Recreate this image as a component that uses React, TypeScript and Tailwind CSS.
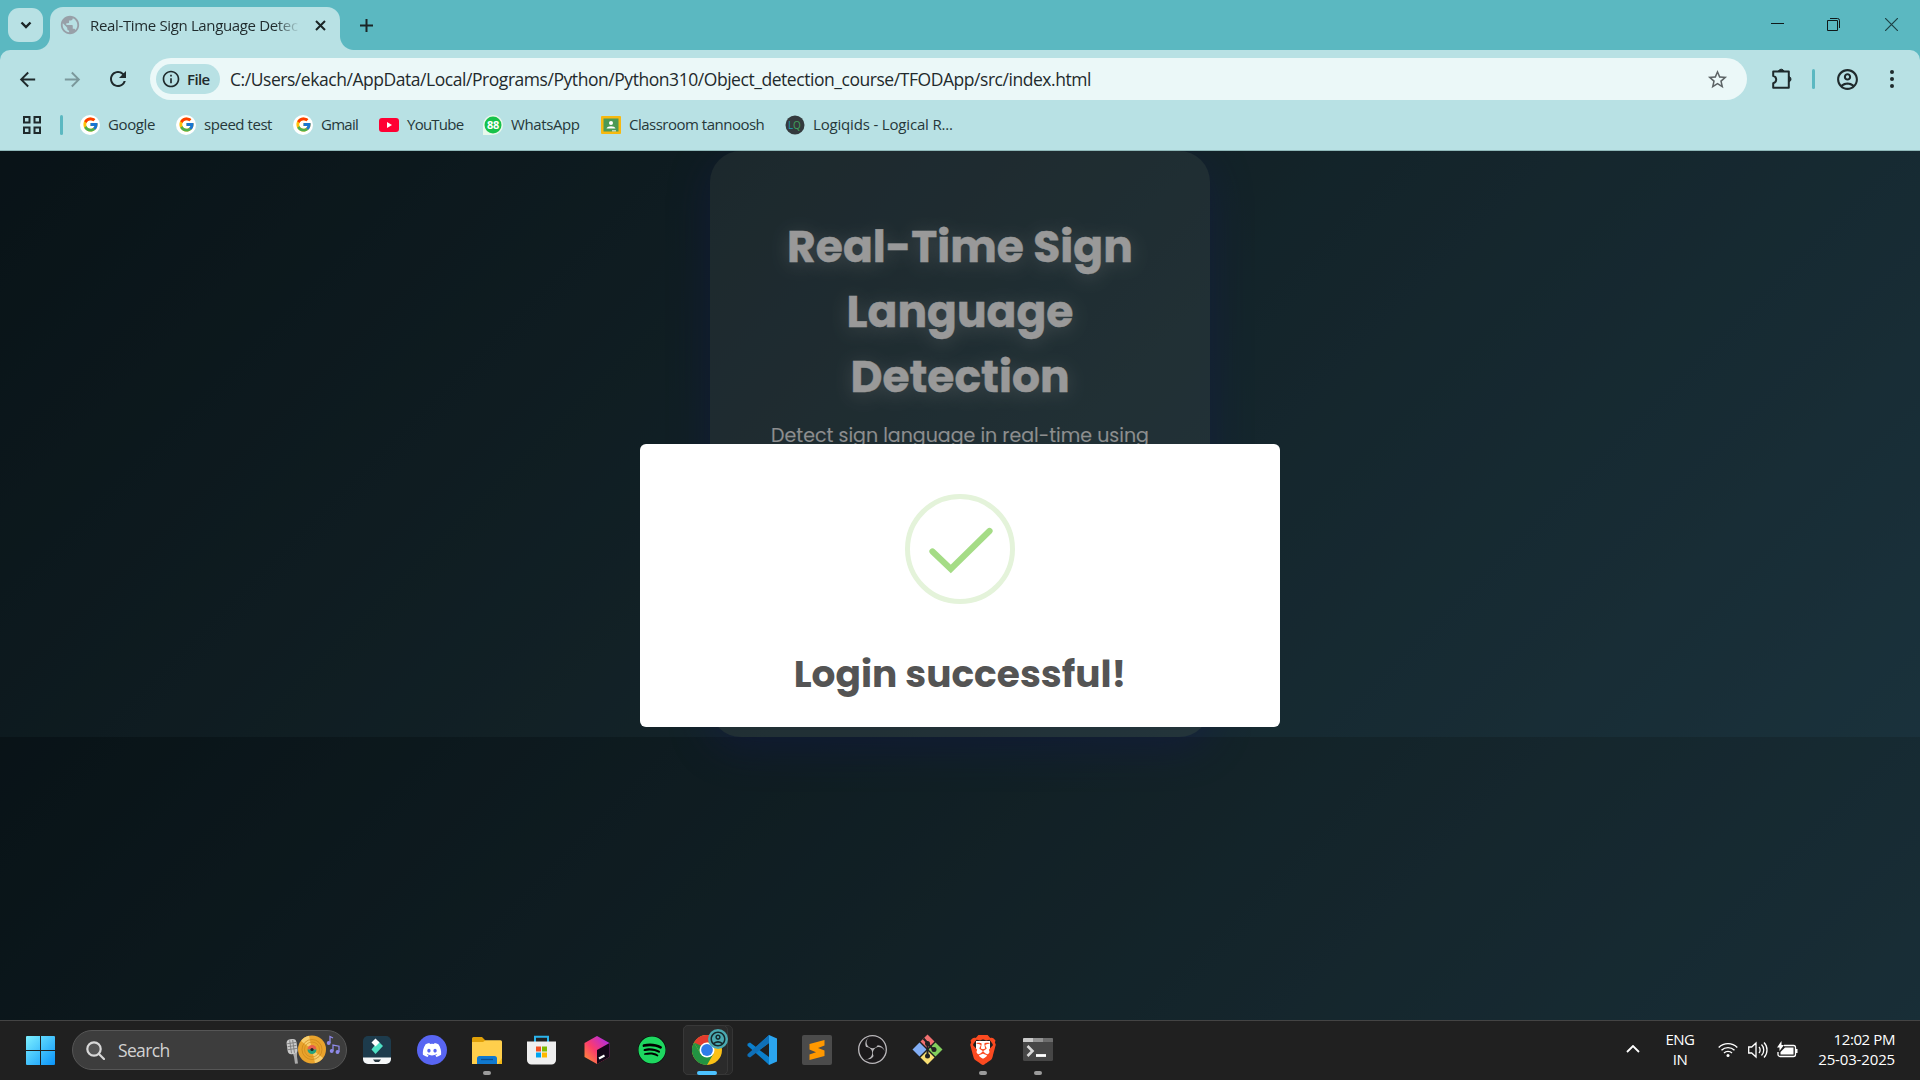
import type { ReactNode } from 'react';
import { FcGoogle } from 'react-icons/fc';
import { FaDiscord, FaSpotify } from 'react-icons/fa';
import { SiBrave, SiObsstudio } from 'react-icons/si';
import {
  MdArrowBack,
  MdArrowForward,
  MdPublic,
  MdRefresh,
  MdStarBorder,
  MdOutlineAccountCircle,
  MdInfoOutline,
} from 'react-icons/md';

function TabStrip() {
  return (
    <div className="flex h-[50px] shrink-0 items-start bg-[#5bb8c1]">
      <div className="ml-2 mt-2 flex h-[34px] w-[35px] items-center justify-center rounded-[11px] bg-[#b8e1e4]">
        <svg width="12" height="8" viewBox="0 0 12 8" fill="none" stroke="#1b2526" strokeWidth="2.4">
          <path d="M1.5 1.5 6 6l4.500-4.500" />
        </svg>
      </div>
      <div className="relative ml-[7px] mt-[7px] flex h-[43px] w-[290px] items-center rounded-t-[13px] bg-[#b8e1e4] pb-[7px]">
        <span className="absolute -left-[14px] bottom-0 h-[14px] w-[14px] bg-[radial-gradient(circle_at_0_0,transparent_13.5px,#b8e1e4_14.5px)]" />
        <span className="absolute -right-[14px] bottom-0 h-[14px] w-[14px] bg-[radial-gradient(circle_at_100%_0,transparent_13.5px,#b8e1e4_14.5px)]" />
        <MdPublic className="ml-[9px] h-[22px] w-[22px] text-[#98a0a8]" />
        <div className="ml-[9px] w-[210px] whitespace-nowrap text-[15px] leading-5 tracking-[-0.35px] text-[#1f2a2c] [mask-image:linear-gradient(90deg,#000_88%,transparent)]">
          Real-Time Sign Language Detec
        </div>
        <svg className="ml-[15px]" width="11" height="11" viewBox="0 0 11 11" stroke="#1b2526" strokeWidth="2">
          <path d="m1 1 9 9m0-9-9 9" />
        </svg>
      </div>
      <svg className="ml-[20px] mt-[19px]" width="13" height="13" viewBox="0 0 13 13" stroke="#1b2526" strokeWidth="2">
        <path d="M6.500 0v13M0 6.500h13" />
      </svg>
      <div className="ml-auto mr-[22px] mt-[18px] flex items-start">
        <svg className="mr-[43px]" width="13" height="13" viewBox="0 0 13 13" stroke="#10191a">
          <path d="M0 5.500h13" />
        </svg>
        <svg className="mr-[45px]" width="13" height="13" viewBox="0 0 13 13" fill="none" stroke="#10191a">
          <path d="M.5 2.500h10v10H.5zM3 .5h7.500a2 2 0 0 1 2 2V10" />
        </svg>
        <svg width="13" height="13" viewBox="0 0 13 13" stroke="#1d4145" strokeWidth="1.200">
          <path d="m0 0 13 13m0-13L0 13" />
        </svg>
      </div>
    </div>
  );
}

function Toolbar() {
  return (
    <div className="h-[58px] shrink-0 bg-[#5bb8c1]">
      <div className="flex h-full items-center rounded-t-[10px] bg-[#b8e1e4] text-[#1f2a2c]">
        <MdArrowBack className="ml-[16px] h-[23px] w-[23px]" />
        <MdArrowForward className="ml-[22px] h-[23px] w-[23px] text-[#7b989b]" />
        <MdRefresh className="ml-[22px] h-[24px] w-[24px]" />
        <div className="ml-[20px] flex h-[42px] w-[1597px] items-center rounded-full bg-[#ebf8f8]">
          <div className="ml-[6px] flex h-[30px] w-[64px] items-center rounded-full bg-[#b8e1e4]">
            <MdInfoOutline className="ml-[5px] h-[20px] w-[20px]" />
            <span className="ml-[6px] text-[15px] font-semibold tracking-[-0.6px]">File</span>
          </div>
          <span className="ml-[10px] whitespace-nowrap text-[17.5px] tracking-[-0.45px]">
            C:/Users/ekach/AppData/Local/Programs/Python/Python310/Object_detection_course/TFODApp/src/index.html
          </span>
          <MdStarBorder className="ml-auto mr-[18px] h-[23px] w-[23px] text-[#5d6466]" />
        </div>
        <svg className="-mt-[2px] ml-[23px]" width="23" height="23" viewBox="0 0 23 23" fill="none" stroke="#1f2a2c" strokeWidth="2">
          <path d="M3.200 4.500h15.600v16.200H3.200v-4.500c4-1 4-6.300 0-7.300z" strokeLinejoin="round" />
          <path d="M8.500 4a3 3 0 0 1 5.500 0zM19.300 9.500a3 3 0 0 1 0 5.400z" fill="#1f2a2c" strokeWidth="1" />
        </svg>
        <span className="ml-[19px] h-5 w-[3px] rounded-full bg-[#5bb8c1]" />
        <MdOutlineAccountCircle className="ml-[20px] h-[25px] w-[25px]" />
        <svg className="-mt-px ml-[29px]" width="6" height="20" viewBox="0 0 6 20" fill="#1f2a2c">
          <circle cx="3" cy="3" r="2" />
          <circle cx="3" cy="10" r="2" />
          <circle cx="3" cy="17" r="2" />
        </svg>
      </div>
    </div>
  );
}

function GoogleMark() {
  return (
    <span className="flex h-5 w-5 items-center justify-center rounded-full bg-white">
      <FcGoogle className="h-[17px] w-[17px]" />
    </span>
  );
}

function Bookmark({ icon, label, className }: { icon: ReactNode; label: string; className: string }) {
  return (
    <div className={`flex shrink-0 items-center gap-2 whitespace-nowrap ${className}`}>
      {icon}
      <span>{label}</span>
    </div>
  );
}

function BookmarksBar() {
  return (
    <div className="flex h-[43px] shrink-0 items-center border-b border-[#8fb8b9] bg-[#b8e1e4] pb-[9px] pl-[23px] text-[15px] text-[#26383a]">
      <svg className="mt-px" width="18" height="18" viewBox="0 0 18 18" fill="none" stroke="#1f2a2c" strokeWidth="2">
        <path d="M1 1h5.500v5.500H1zM11.500 1H17v5.500h-5.500zM1 11.500h5.500V17H1zM11.500 11.500H17V17h-5.500z" />
      </svg>
      <span className="ml-[19px] mr-[17px] h-5 w-[3px] rounded-full bg-[#5bb8c1]" />
      <Bookmark className="w-[96px] tracking-[-0.4px]" icon={<GoogleMark />} label="Google" />
      <Bookmark className="w-[117px] tracking-[-0.45px]" icon={<GoogleMark />} label="speed test" />
      <Bookmark className="w-[86px] tracking-[-0.75px]" icon={<GoogleMark />} label="Gmail" />
      <Bookmark
        className="w-[104px] tracking-[-0.75px]"
        icon={
          <svg width="20" height="20" viewBox="0 0 20 20">
            <rect y="3" width="20" height="14" rx="3" fill="#f03" />
            <path d="m8 7 5 3-5 3z" fill="#fff" />
          </svg>
        }
        label="YouTube"
      />
      <Bookmark
        className="w-[118px] tracking-[-0.4px]"
        icon={
          <svg width="20" height="20" viewBox="0 0 20 20">
            <path d="M0 20V10a10 10 0 1 1 10 10z" fill="#e8f8ec" />
            <circle cx="10" cy="10" r="8.500" fill="#17c24a" />
            <text x="10" y="14" fontSize="11" fontWeight="700" textAnchor="middle" fill="#fff">88</text>
          </svg>
        }
        label="WhatsApp"
      />
      <Bookmark
        className="w-[184px] tracking-[-0.5px]"
        icon={
          <svg width="20" height="18" viewBox="0 0 20 18">
            <rect width="20" height="18" rx="1" fill="#f7b90f" />
            <rect x="2.500" y="2.500" width="15" height="13" fill="#4c9a55" />
            <circle cx="10" cy="7" r="2" fill="#fff" />
            <path d="M5.500 12.500c1-3 8-3 9 0z" fill="#fff" />
            <path d="M11 15.500h4V14h-4z" fill="#fff" opacity=".6" />
          </svg>
        }
        label="Classroom tannoosh"
      />
      <Bookmark
        className="tracking-[-0.17px]"
        icon={
          <svg width="20" height="20" viewBox="0 0 20 20">
            <circle cx="10" cy="10" r="9.500" fill="#343a3d" />
            <text x="3" y="13.500" fontSize="10" fill="#1d9fb5">L</text>
            <text x="8" y="13.500" fontSize="10" fill="#3fa35c">Q</text>
          </svg>
        }
        label="Logiqids - Logical R..."
      />
    </div>
  );
}

function LoginModal() {
  return (
    <div className="absolute left-[640px] top-[293px] flex h-[283px] w-[640px] flex-col items-center rounded-[6px] bg-white">
      <svg className="mt-[50px]" width="110" height="110" viewBox="0 0 110 110" fill="none">
        <circle cx="55" cy="55" r="52.500" stroke="#e4f3da" strokeWidth="5" />
        <path d="m27.500 57.500 18.300 17.500 38.700-38" stroke="#a5dc86" strokeWidth="6.200" strokeLinecap="round" />
      </svg>
      <h2 className="mt-[44px] whitespace-nowrap text-[37.5px] font-bold leading-[52px] text-[#545454]">
        Login successful!
      </h2>
    </div>
  );
}

function Page() {
  return (
    <main className="relative h-[869px] shrink-0 overflow-hidden bg-[linear-gradient(135deg,#0f2027,#203a43,#2c5364)] bg-[length:1920px_586px] font-[Poppins,Inter,sans-serif]">
      <section className="mx-auto flex h-[586px] w-[500px] flex-col items-center rounded-[31px] bg-white/10 pt-[63px] text-center shadow-[0_10px_40px_rgba(31,38,135,0.4)]">
        <h1 className="w-[400px] text-[44px] font-bold leading-[65px] text-white [-webkit-text-stroke:0.4px_#fff] [text-shadow:0_3px_19px_rgba(255,255,255,0.3)]">
          Real-Time Sign
          <br />
          Language
          <br />
          Detection
        </h1>
        <p className="mt-[9px] whitespace-nowrap text-[19px] leading-[36px] text-white/90">
          Detect sign language in real-time using
        </p>
      </section>
      <div className="absolute inset-0 bg-black/40" />
      <LoginModal />
    </main>
  );
}

function Task({ children, mark }: { children: ReactNode; mark?: boolean }) {
  return (
    <div className="relative flex h-full w-[55.100px] shrink-0 items-center justify-center pb-[2px]">
      {children}
      {mark && <span className="absolute bottom-[5px] h-1 w-2 rounded-full bg-[#9b9b9b]" />}
    </div>
  );
}

function ChromeIcon() {
  return (
    <svg width="30" height="30" viewBox="0 0 30 30">
      <circle cx="15" cy="15" r="15" fill="#fbc116" />
      <path d="M2 7.500A15 15 0 0 0 15 30l6.500-11.200L15 15 8.500 18.700z" fill="#229342" />
      <path d="M2 7.500A15 15 0 0 1 28 7.500H15L9 15z" fill="#e33b2e" />
      <path d="M2 7.500 8.500 18.700 12 12z" fill="#229342" />
      <circle cx="15" cy="15" r="7.500" fill="#fff" />
      <circle cx="15" cy="15" r="5.900" fill="#2f7de9" />
    </svg>
  );
}

function Taskbar() {
  return (
    <footer className="flex h-[60px] shrink-0 items-center border-t border-[#444] bg-[#202020] text-white">
      <svg className="ml-[26px]" width="29" height="29" viewBox="0 0 29 29">
        <defs>
          <linearGradient id="win" x1="0" y1="0" x2="1" y2="1">
            <stop stopColor="#7df0ff" />
            <stop offset="1" stopColor="#0a94fa" />
          </linearGradient>
        </defs>
        <path
          fill="url(#win)"
          d="M1 0h13v14H0V1a1 1 0 0 1 1-1zM15 0h13a1 1 0 0 1 1 1v13H15zM0 15h14v14H1a1 1 0 0 1-1-1zM15 15h14v13a1 1 0 0 1-1 1H15z"
        />
      </svg>
      <div className="-mt-px ml-[17px] flex h-10 w-[275px] items-center rounded-full border border-[#565656] bg-[#3d3d3d]">
        <svg className="ml-[13px]" width="19" height="19" viewBox="0 0 19 19" fill="none" stroke="#d8d8d8" strokeWidth="2.200">
          <circle cx="8" cy="8" r="6.700" fill="#555" />
          <path d="m13 13 5 5" strokeLinecap="round" />
        </svg>
        <span className="ml-[13px] text-[17.5px] tracking-[-0.65px] text-[#d2d2d2]">Search</span>
        <svg className="ml-auto mr-[6px]" width="54" height="32" viewBox="0 0 54 32">
          <g transform="translate(-1.500 0) rotate(-8 8 12)">
            <path d="M7 17h5l-1 6v7H8v-7z" fill="#aaa" />
            <rect x="2.500" y="5" width="10" height="15" rx="4" fill="#c9c9c9" />
            <path d="M3 9h9M3 12h9M3 15h9M6 6v13M9 6v13" stroke="#777" strokeWidth=".8" />
          </g>
          <circle cx="26" cy="15.500" r="14" fill="#e9a32c" />
          <path d="M26 15.500 15 6.900A14 14 0 0 1 23 1.800zM26 15.500l11 8.600a14 14 0 0 1-8 5z" fill="#f8ce6d" />
          <circle cx="26" cy="15.500" r="10" fill="none" stroke="#c98418" strokeWidth=".7" />
          <circle cx="26" cy="15.500" r="7.500" fill="none" stroke="#c98418" strokeWidth=".6" />
          <path d="M21.500 15.500a4.500 4.500 0 0 1 9 0z" fill="#e8604c" />
          <path d="M21.500 15.500a4.500 4.500 0 0 0 9 0z" fill="#27a17c" />
          <circle cx="26" cy="15.500" r="1.600" fill="#222" />
          <g stroke="#8e8ae8" fill="#8e8ae8" strokeWidth="1.300">
            <path d="M44 9V2.500l3 1.500M47 17v-6l6 1.200V18" fill="none" />
            <circle cx="42.700" cy="9" r="1.300" />
            <circle cx="45.700" cy="17" r="1.300" />
            <circle cx="51.500" cy="18" r="1.300" />
          </g>
        </svg>
      </div>
      <div className="ml-[2px] flex h-full">
        <Task>
          <svg width="28" height="28" viewBox="0 0 28 28">
            <rect width="28" height="28" rx="5" fill="#1d3b4c" />
            <path d="m15 5 5 5-7.500 8-4-4.500z" fill="#4fe0c4" />
            <path d="m12.500 2.500 4 4-4 4-4-4z" fill="#fff" />
            <path d="M0 21.500h28V23a5 5 0 0 1-5 5H5a5 5 0 0 1-5-5z" fill="#f5f7f8" />
            <path d="M10 23.500h8l-2 2.500h-4z" fill="#26363e" />
          </svg>
        </Task>
        <Task>
          <span className="flex h-[30px] w-[30px] items-center justify-center rounded-full bg-[#5865f2]">
            <FaDiscord className="h-5 w-5" />
          </span>
        </Task>
        <Task mark>
          <svg className="mt-px" width="30" height="27" viewBox="0 0 30 27">
            <path d="M0 1.500A1.500 1.500 0 0 1 1.500 0H10l3.500 3.500V8H0z" fill="#e0a008" />
            <path d="M0 5h11l2.500-1.800H28.500A1.500 1.500 0 0 1 30 4.700V27H0z" fill="#ffcf4c" />
            <path d="M5 27v-5.500A2.500 2.500 0 0 1 7.500 19h15a2.500 2.500 0 0 1 2.500 2.500V27z" fill="#1079cf" />
            <path d="M9 22.500h12" stroke="#0b4f91" strokeWidth="1.300" />
            <path d="M26 27h4v-6z" fill="#f3b918" />
          </svg>
        </Task>
        <Task>
          <svg className="mt-px" width="29" height="30" viewBox="0 0 29 30">
            <path d="M8 7V1.800h13V7" fill="none" stroke="#2bb4ec" strokeWidth="2" />
            <path d="M0 6.500h29V25a4.500 4.500 0 0 1-4.500 4.500h-20A4.500 4.500 0 0 1 0 25z" fill="#efefef" />
            <path d="M9 11.500h5v5H9z" fill="#f25022" />
            <path d="M15 11.500h5v5h-5z" fill="#7fba00" />
            <path d="M9 17.500h5v5H9z" fill="#00a4ef" />
            <path d="M15 17.500h5v5h-5z" fill="#ffb900" />
          </svg>
        </Task>
        <Task>
          <svg width="26" height="28" viewBox="0 0 26 28">
            <defs>
              <linearGradient id="tbx" x1="0" y1="1" x2="1" y2="0">
                <stop stopColor="#ff9a2e" />
                <stop offset=".45" stopColor="#fb3c6d" />
                <stop offset="1" stopColor="#a127ff" />
              </linearGradient>
            </defs>
            <path d="m13 0 12.500 7v14L13 28 .5 21V7z" fill="url(#tbx)" />
            <path d="m13 14 12.500-7v14L13 28z" fill="#150619" />
            <path d="m15 22.500 5.500-3" stroke="#fff" strokeWidth="2" />
          </svg>
        </Task>
        <Task>
          <span className="flex rounded-full bg-black">
            <FaSpotify className="h-7 w-7 text-[#1ed760]" />
          </span>
        </Task>
        <Task>
          <div className="absolute left-[3px] top-1 h-[50px] w-[50px] rounded-[5px] border border-[#353535] bg-[#282828]" />
          <div className="absolute left-[3px] top-1 h-[50px] w-[45px] rounded-[5px] border border-[#383838] bg-[#2b2b2b]" />
          <div className="relative">
            <ChromeIcon />
            <span className="absolute -right-[6px] -top-[6px] flex h-5 w-5 items-center justify-center rounded-full bg-[#4aa9b1]">
              <MdOutlineAccountCircle className="h-[18px] w-[18px] text-[#16292c]" />
            </span>
          </div>
          <span className="absolute bottom-[5px] h-1 w-5 rounded-full bg-[#4cc2ff]" />
        </Task>
        <Task>
          <svg width="30" height="30" viewBox="0 0 30 30">
            <path d="M22 0 9 12 3 7.500.500 8.800v2L20 28l2 2V22L12.500 15 22 8z" fill="#0b7fcc" />
            <path d="M.5 19.200 22 0v8L3 22.500.500 21.200z" fill="#0f70b8" />
            <path d="M22 0 30 3.500v23L22 30z" fill="#2ba5f0" />
          </svg>
        </Task>
        <Task>
          <svg width="30" height="30" viewBox="0 0 30 30">
            <rect width="30" height="30" rx="2" fill="#4b4b4b" />
            <path d="M22.500 5v5.500l-6.500 2.500 6.500 2.500V21L7.500 25v-5.500l6.500-2.300-6.500-2.700V9z" fill="#ff9800" />
          </svg>
        </Task>
        <Task>
          <span className="rounded-full bg-[#1b191b]">
            <SiObsstudio className="h-[29px] w-[29px] text-[#b9b7ba]" />
          </span>
        </Task>
        <Task>
          <svg width="31" height="31" viewBox="0 0 31 31">
            <path d="m15.500.500 7 7-7 7-7-7z" fill="#f17070" />
            <path d="m7.500 8.500 7 7-7 7-7-7z" fill="#82aef5" />
            <path d="m23.500 8.500 7 7-7 7-7-7z" fill="#82cf5c" />
            <path d="m15.500 16.500 7 7-7 7-7-7z" fill="#f8de72" />
            <path d="M11.500 4.500 15.500 9v14M16 10l6 6" stroke="#222" strokeWidth="2" fill="none" />
            <circle cx="15.500" cy="9.500" r="2.500" fill="#222" />
            <circle cx="22" cy="15.500" r="2.500" fill="#222" />
            <circle cx="15.500" cy="22" r="2.500" fill="#222" />
          </svg>
        </Task>
        <Task mark>
          <span className="relative flex h-[30px] w-[26px] items-center justify-center">
            <span className="absolute left-[6px] top-[6px] h-[18px] w-[14px] rounded-b-full bg-white" />
            <SiBrave className="relative h-[30px] w-[30px] shrink-0 text-[#fb4a20]" />
          </span>
        </Task>
        <Task mark>
          <svg width="30" height="23" viewBox="0 0 30 23">
            <rect width="30" height="23" rx="1.500" fill="#464646" />
            <path d="M1 0h9v4H0V1a1 1 0 0 1 1-1z" fill="#c9c9c9" />
            <path d="M10 0h10v4H10z" fill="#929292" />
            <path d="M20 0h9a1 1 0 0 1 1 1v3H20z" fill="#6c6c6c" />
            <path d="m4.500 8 5 5-5 5" fill="none" stroke="#d8d8d8" strokeWidth="2.600" />
            <path d="M13 17.500h10" stroke="#fff" strokeWidth="2.800" />
          </svg>
        </Task>
      </div>
      <div className="ml-auto mr-[25px] flex items-center pb-[3px] text-[15px] leading-5">
        <svg width="14" height="8" viewBox="0 0 14 8" fill="none" stroke="#fff" strokeWidth="1.800">
          <path d="m1 7 6-6 6 6" />
        </svg>
        <div className="ml-[24px] w-[32px] whitespace-nowrap text-center tracking-[-0.5px]">
          ENG
          <br />
          IN
        </div>
        <svg className="ml-[22px] mt-px" width="20" height="16" viewBox="0 0 20 16" fill="none" stroke="#fff" strokeWidth="1.400">
          <path d="M.7 5.500a13.200 13.200 0 0 1 18.600 0M3.500 8.300a9.200 9.200 0 0 1 13 0M6 11a5.700 5.700 0 0 1 8 0" />
          <circle cx="10" cy="13.500" r="1.500" fill="#fff" stroke="none" />
        </svg>
        <svg className="ml-[10px] mt-px" width="20" height="18" viewBox="0 0 20 18" fill="none" stroke="#fff" strokeWidth="1.300">
          <path d="M.7 6h3L8 2v14l-4.300-4h-3zM11 6c1.500 1.500 1.500 4.500 0 6M13.500 3.500c3 3 3 8 0 11M16 1.500c4 4 4 11 0 15" />
        </svg>
        <svg className="ml-[9px]" width="21" height="17" viewBox="0 0 21 17">
          <path d="M7 4.500h9.500a2 2 0 0 1 2 2v7a2 2 0 0 1-2 2H3a2 2 0 0 1-2-2V11" fill="none" stroke="#fff" strokeWidth="1.300" />
          <path d="M8 6.500h8.500v7H3.500V11z" fill="#fff" />
          <path d="M19 8h1.500v4H19zM4.500 0 0 6.500h2.500V10L7 4H4.500z" fill="#fff" />
        </svg>
        <div className="ml-[19px] flex w-[78px] flex-col items-end whitespace-nowrap">
          <span className="tracking-[-0.4px]">12:02 PM</span>
          <span className="tracking-[-0.15px]">25-03-2025</span>
        </div>
      </div>
    </footer>
  );
}

export default function App() {
  return (
    <div className="flex h-[1080px] w-[1920px] flex-col overflow-hidden font-['Segoe_UI','Open_Sans',sans-serif]">
      <TabStrip />
      <Toolbar />
      <BookmarksBar />
      <Page />
      <Taskbar />
    </div>
  );
}
